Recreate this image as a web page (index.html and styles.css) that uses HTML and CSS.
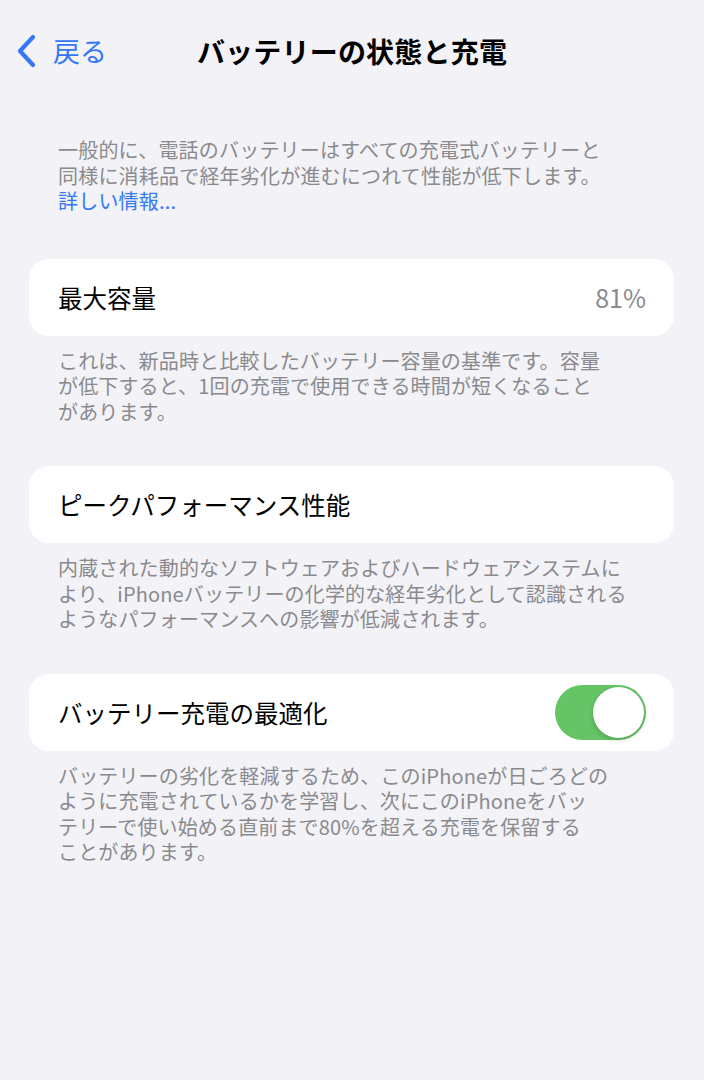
FILE: index.html
```html
<!DOCTYPE html>
<html lang="ja">
<head>
<meta charset="utf-8">
<link rel="stylesheet" href="styles.css">
</head>
<body>
<div class="screen">
  <header class="nav">
    <div class="back">
      <svg class="chev" width="22" height="34" viewBox="0 0 22 34"><path d="M18 3 L5 17 L18 31" fill="none" stroke="#3478f6" stroke-width="4.2" stroke-linecap="round" stroke-linejoin="round"/></svg>
      <span class="back-text">戻る</span>
    </div>
    <h1 class="title">バッテリーの状態と充電</h1>
    <div></div>
  </header>

  <p class="intro">一般的に、電話のバッテリーはすべての充電式バッテリーと<br>同様に消耗品で経年劣化が進むにつれて性能が低下します。<br><span class="link">詳しい情報...</span></p>

  <section class="group first">
    <div class="card">
      <span class="label">最大容量</span>
      <span class="value">81%</span>
    </div>
    <p class="foot">これは、新品時と比較したバッテリー容量の基準です。容量<br>が低下すると、1回の充電で使用できる時間が短くなること<br>があります。</p>
  </section>

  <section class="group">
    <div class="card">
      <span class="label">ピークパフォーマンス性能</span>
    </div>
    <p class="foot">内蔵された動的なソフトウェアおよびハードウェアシステムに<br>より、iPhoneバッテリーの化学的な経年劣化として認識される<br>ようなパフォーマンスへの影響が低減されます。</p>
  </section>

  <section class="group">
    <div class="card">
      <span class="label">バッテリー充電の最適化</span>
      <span class="toggle"><span class="knob"></span></span>
    </div>
    <p class="foot">バッテリーの劣化を軽減するため、このiPhoneが日ごろどの<br>ように充電されているかを学習し、次にこのiPhoneをバッ<br>テリーで使い始める直前まで80%を超える充電を保留する<br>ことがあります。</p>
  </section>
</div>
</body>
</html>
```

FILE: styles.css
```css
html, body {
  margin: 0;
  padding: 0;
  background: #f2f2f7;
}
body {
  font-family: "Noto Sans CJK JP", "Noto Sans", sans-serif;
  width: 704px;
  height: 1080px;
  overflow: hidden;
}
.screen {
  padding: 0 30px 0 29px;
}
.nav {
  display: grid;
  grid-template-columns: 1fr auto 1fr;
  align-items: center;
  height: 40px;
  padding-top: 31px;
  margin: 0 -30px 0 -29px;
}
.back {
  display: flex;
  align-items: center;
  padding-left: 15px;
  gap: 16px;
  color: #3478f6;
}
.chev {
  display: block;
}
.back-text {
  font-size: 27px;
  line-height: 40px;
}
.title {
  margin: 0;
  font-size: 28px;
  line-height: 40px;
  font-weight: 700;
  color: #000;
  letter-spacing: 0.2px;
}
.intro {
  margin: 66px 0 0;
  padding-left: 29px;
  font-size: 20px;
  line-height: 25.5px;
  letter-spacing: 0.2px;
  color: #8a8a8e;
}
.link {
  color: #3478f6;
}
.group {
  margin-top: 42px;
}
.group.first {
  margin-top: 45px;
}
.card {
  background: #fff;
  border-radius: 20px;
  height: 77px;
  display: flex;
  align-items: center;
  justify-content: space-between;
  padding: 0 28px 0 29px;
}
.label {
  font-size: 24.5px;
  color: #000;
}
.value {
  font-size: 25px;
  color: #8a8a8e;
}
.toggle {
  width: 91px;
  height: 55px;
  border-radius: 28px;
  background: #65c466;
  display: flex;
  align-items: center;
  justify-content: flex-end;
  padding-right: 2px;
  box-sizing: border-box;
}
.knob {
  width: 51px;
  height: 51px;
  border-radius: 50%;
  background: #fff;
  box-shadow: 0 2px 5px rgba(0,0,0,0.18);
}
.foot {
  margin: 12px 0 0;
  padding-left: 29px;
  font-size: 20px;
  line-height: 25.5px;
  letter-spacing: 0.15px;
  color: #8a8a8e;
}
```
